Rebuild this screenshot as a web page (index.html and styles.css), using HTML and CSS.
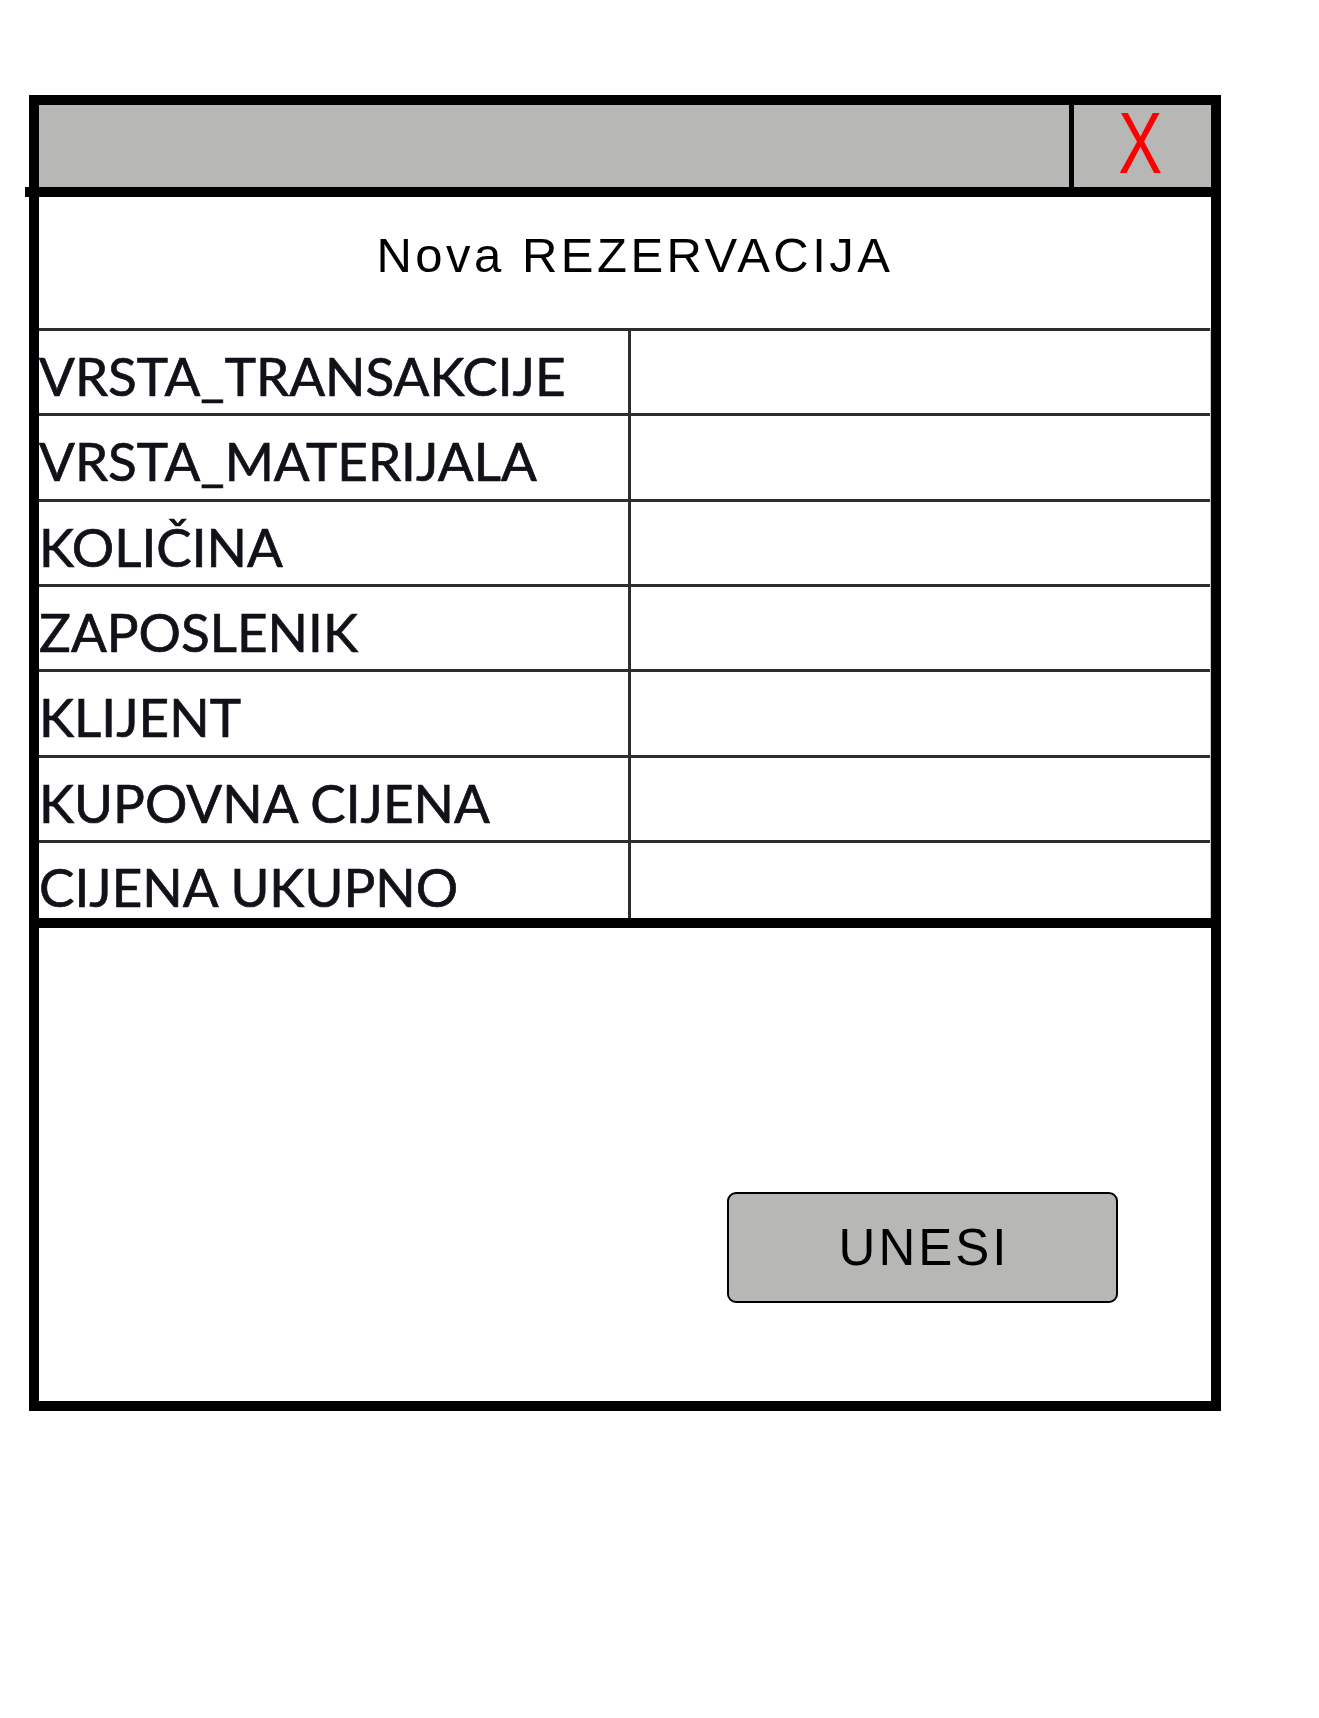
FILE: index.html
```html
<!DOCTYPE html>
<html lang="hr">
<head>
<meta charset="utf-8">
<title>Nova REZERVACIJA</title>
<link rel="stylesheet" href="styles.css">
</head>
<body>
<div class="window">
  <div class="titlebar">
    <div class="titlebar-fill"></div>
    <div class="titlebar-divider"></div>
    <div class="close-cell"><span class="close-x">X</span></div>
  </div>
  <div class="heading">Nova REZERVACIJA</div>
  <div class="form-table">
    <div class="row"><div class="label">VRSTA_TRANSAKCIJE</div><div class="value"></div></div>
    <div class="row"><div class="label">VRSTA_MATERIJALA</div><div class="value"></div></div>
    <div class="row"><div class="label">KOLIČINA</div><div class="value"></div></div>
    <div class="row"><div class="label">ZAPOSLENIK</div><div class="value"></div></div>
    <div class="row"><div class="label">KLIJENT</div><div class="value"></div></div>
    <div class="row"><div class="label">KUPOVNA CIJENA</div><div class="value"></div></div>
    <div class="row row-last"><div class="label">CIJENA UKUPNO</div><div class="value"></div></div>
  </div>
  <div class="actions">
    <button class="submit-btn" type="button">UNESI</button>
  </div>
</div>
</body>
</html>
```

FILE: styles.css
```css
html, body {
  margin: 0;
  padding: 0;
  background: #ffffff;
}

body {
  width: 1319px;
  height: 1718px;
  padding-top: 95px;
  box-sizing: border-box;
  font-family: "Liberation Sans", Arial, sans-serif;
}

.window {
  margin-left: 29px;
  width: 1192px;
  height: 1316px;
  box-sizing: border-box;
  border: 10px solid #000;
  display: flex;
  flex-direction: column;
  background: #fff;
}

.titlebar {
  position: relative;
  height: 82px;
  border-bottom: 10px solid #000;
  background: #b7b7b6;
  display: flex;
  flex-shrink: 0;
}

.titlebar::before {
  content: "";
  position: absolute;
  left: -14px;
  top: 82px;
  width: 14px;
  height: 10px;
  background: #000;
}

.titlebar-fill {
  flex: 1;
}

.titlebar-divider {
  width: 5px;
  background: #000;
}

.close-cell {
  width: 137px;
  display: flex;
  align-items: center;
  justify-content: center;
}

.close-x {
  display: inline-block;
  color: #ff0000;
  font-family: "Liberation Sans", Arial, sans-serif;
  font-size: 88px;
  line-height: 88px;
  transform: scaleX(0.75);
  margin-top: -6px;
  margin-right: 4px;
}

.heading {
  height: 131px;
  box-sizing: border-box;
  padding-top: 34px;
  padding-left: 20px;
  text-align: center;
  font-size: 49px;
  line-height: 49px;
  letter-spacing: 3.5px;
  color: #000;
  flex-shrink: 0;
}

.form-table {
  display: flex;
  flex-direction: column;
  border-right: 1px solid #c8c8c8;
  flex-shrink: 0;
}

.row {
  display: flex;
  height: 85.33px;
  box-sizing: border-box;
  border-top: 3px solid #2e2e2e;
}

.row-last {
  height: 78px;
}

.label {
  width: 592px;
  box-sizing: border-box;
  border-right: 3px solid #2e2e2e;
  display: flex;
  align-items: center;
  padding-left: 0;
  padding-top: 7px;
  font-family: Lato, "Open Sans", sans-serif;
  font-size: 53px;
  line-height: 53px;
  color: #111118;
  -webkit-text-stroke: 0.7px #111118;
  white-space: nowrap;
}

.row-last .label {
  padding-top: 13px;
}

.value {
  flex: 1;
}

.actions {
  flex: 1;
  border-top: 10px solid #000;
  display: flex;
  justify-content: flex-end;
  align-items: flex-start;
  padding-top: 264px;
  padding-right: 93px;
}

.submit-btn {
  width: 391px;
  height: 111px;
  box-sizing: border-box;
  border: 2px solid #000;
  border-radius: 9px;
  background: #b7b7b6;
  color: #000;
  font-family: "Liberation Sans", Arial, sans-serif;
  font-size: 51px;
  letter-spacing: 3px;
  padding: 0 0 0 3px;
  display: flex;
  align-items: center;
  justify-content: center;
}
```
